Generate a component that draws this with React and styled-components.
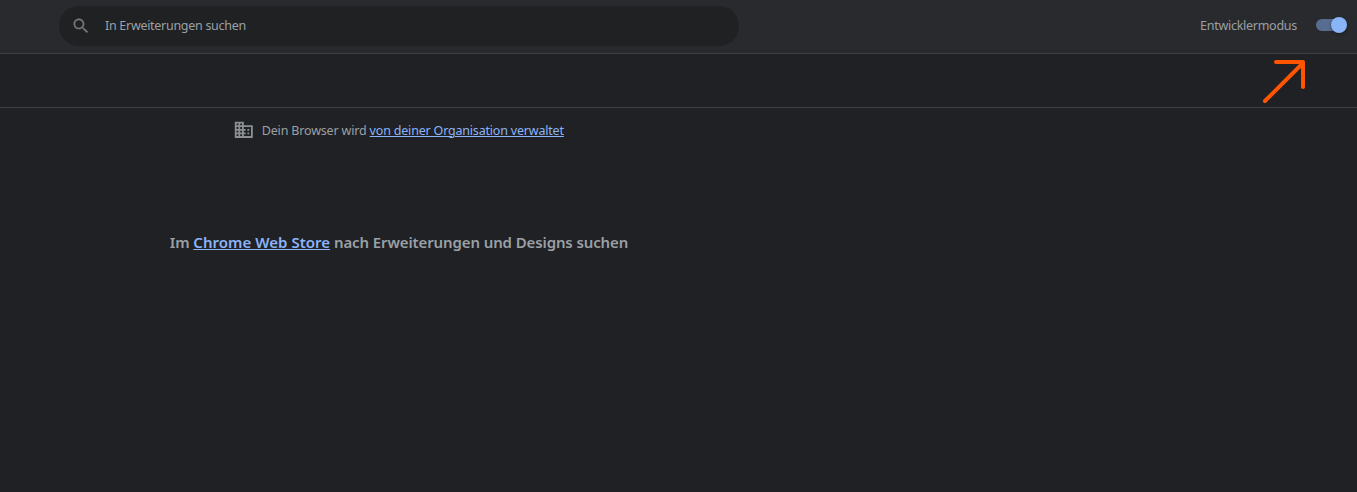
import React from 'react';
import styled, { createGlobalStyle } from 'styled-components';

const GlobalStyle = createGlobalStyle`
  *, *::before, *::after { box-sizing: border-box; }
  body {
    margin: 0;
    background: #202124;
    color: #9aa0a6;
    font-family: "Segoe UI", "Noto Sans", "Open Sans", sans-serif;
    font-size: 13px;
    line-height: 20px;
  }
`;

const Page = styled.div`
  position: relative;
  display: flex;
  flex-direction: column;
  width: 100%;
  height: 492px;
  overflow: hidden;
`;

const Toolbar = styled.header`
  display: flex;
  align-items: flex-start;
  justify-content: space-between;
  height: 54px;
  padding: 6px 10px 0 59px;
  background: #292a2d;
  border-bottom: 1px solid #3f4042;
`;

const SearchField = styled.div`
  display: flex;
  align-items: center;
  gap: 14px;
  width: 680px;
  height: 40px;
  padding-left: 12px;
  border-radius: 20px;
  background: #202123;
`;

const Icon = styled.svg`
  flex: none;
  width: ${(p) => p.$size}px;
  height: ${(p) => p.$size}px;
  fill: ${(p) => p.$color};
`;

const Label = styled.span`
  padding-top: 2px;
  white-space: nowrap;
  font-size: 12.5px;
  letter-spacing: ${(p) => p.$spacing || 0}px;
`;

const SearchText = styled(Label)`
  padding-top: 0;
`;

const Heading = styled(Label)`
  padding-top: 0;
  font-size: 15px;
  font-weight: 600;
`;

const DevMode = styled.div`
  display: flex;
  align-items: center;
  gap: 19px;
  height: 38px;
`;

const Switch = styled.div`
  display: flex;
  align-items: center;
  width: 31px;
  height: 16px;
`;

const Track = styled.div`
  width: 28px;
  height: 12px;
  border-radius: 6px;
  background: #586c92;
`;

const Knob = styled.div`
  flex: none;
  width: 16px;
  height: 16px;
  margin-left: -13px;
  border-radius: 50%;
  background: #8ab4f8;
  box-shadow: 0 1px 3px rgba(0, 0, 0, 0.4);
`;

const Drawer = styled.div`
  height: 54px;
  border-bottom: 1px solid #3f4042;
`;

const Content = styled.main`
  display: flex;
  flex-direction: column;
  align-items: center;
  width: 798px;
`;

const ManagedNotice = styled.div`
  display: flex;
  align-items: center;
  gap: 7px;
  height: 22px;
  margin-top: 11px;
  padding-right: 1px;
`;

const Link = styled.a`
  color: #8ab4f8;
  letter-spacing: ${(p) => p.$spacing}px;
  text-decoration: underline;
  text-decoration-thickness: 1px;
  text-underline-offset: 1px;
`;

const StorePrompt = styled.div`
  display: flex;
  align-items: center;
  height: 24px;
  margin-top: 89px;
`;

const Pointer = styled.svg`
  position: absolute;
  left: 1260px;
  top: 56px;
  width: 50px;
  height: 50px;
  fill: none;
  stroke: #ff5500;
  stroke-width: 4;
  stroke-linecap: round;
  stroke-linejoin: round;
`;

export default function App() {
  return (
    <Page>
      <GlobalStyle />
      <Toolbar>
        <SearchField>
          <Icon $size={20} $color="#75787b" viewBox="0 0 24 24">
            <path d="M15.5 14h-.79l-.28-.27C15.41 12.59 16 11.11 16 9.5 16 5.91 13.09 3 9.5 3S3 5.91 3 9.5 5.91 16 9.5 16c1.61 0 3.09-.59 4.23-1.57l.27.28v.79l5 4.99L20.49 19l-4.99-5zm-6 0C7.01 14 5 11.99 5 9.5S7.01 5 9.5 5 14 7.01 14 9.5 11.99 14 9.5 14z" />
          </Icon>
          <SearchText $spacing={-0.29}>In Erweiterungen suchen</SearchText>
        </SearchField>
        <DevMode>
          <Label $spacing={-0.27}>Entwicklermodus</Label>
          <Switch>
            <Track />
            <Knob />
          </Switch>
        </DevMode>
      </Toolbar>
      <Drawer />
      <Content>
        <ManagedNotice>
          <Icon $size={21.6} $color="#8b9095" viewBox="0 0 24 24">
            <path d="M12 7V3H2v18h20V7H12zM6 19H4v-2h2v2zm0-4H4v-2h2v2zm0-4H4V9h2v2zm0-4H4V5h2v2zm4 12H8v-2h2v2zm0-4H8v-2h2v2zm0-4H8V9h2v2zm0-4H8V5h2v2zm10 12h-8v-2h2v-2h-2v-2h2v-2h-2V9h8v10zm-2-8h-2v2h2v-2zm0 4h-2v2h2v-2z" />
          </Icon>
          <Label $spacing={-0.17}>
            Dein Browser wird <Link $spacing={-0.19}>von deiner Organisation verwaltet</Link>
          </Label>
        </ManagedNotice>
        <StorePrompt>
          <Heading $spacing={-0.11}>
            Im <Link $spacing={0.03}>Chrome Web Store</Link> nach Erweiterungen und Designs suchen
          </Heading>
        </StorePrompt>
      </Content>
      <Pointer viewBox="0 0 50 50">
        <path d="M5 45 L43 7 M16 6 H43 V31" />
      </Pointer>
    </Page>
  );
}
